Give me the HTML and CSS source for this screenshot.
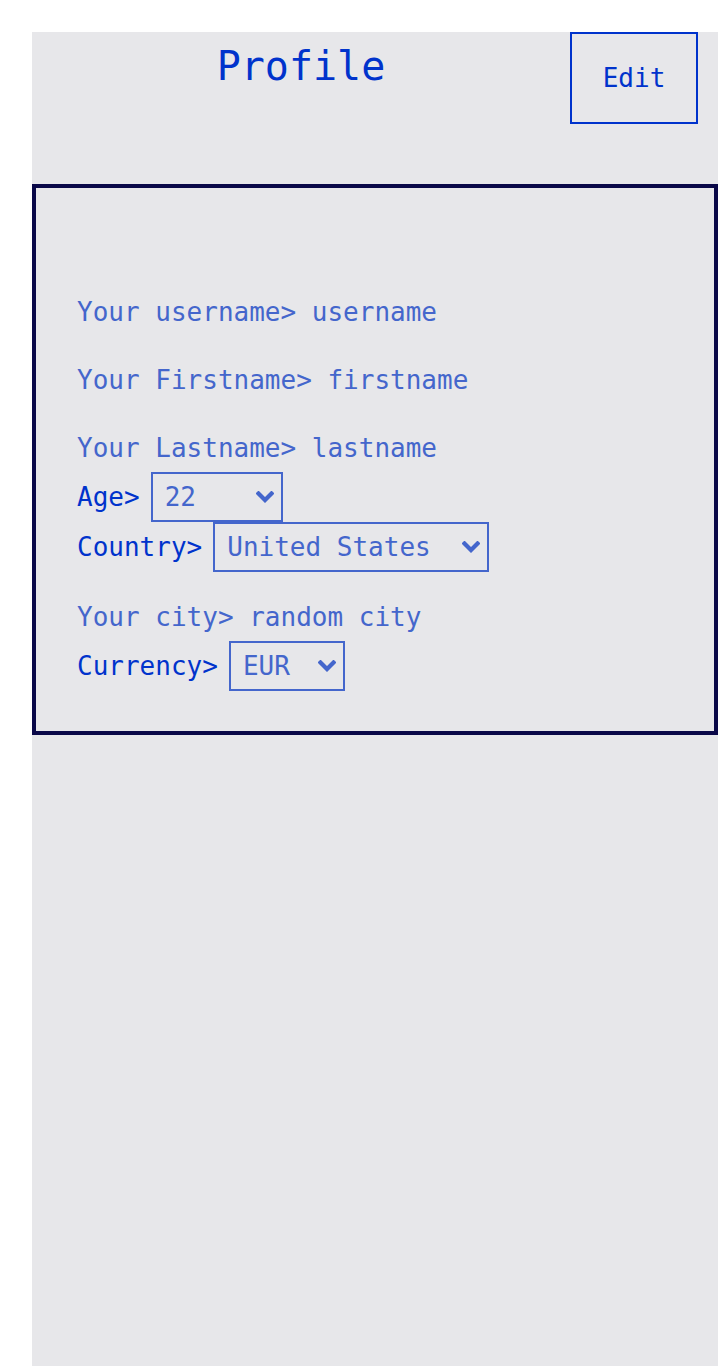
FILE: index.html
```html
<!DOCTYPE html>
<html lang="en">
<head>
<meta charset="utf-8">
<title>Profile</title>
<link rel="stylesheet" href="styles.css">
</head>
<body>
<div class="page">
  <header class="top">
    <h1 class="title">Profile</h1>
    <button class="edit" type="button">Edit</button>
  </header>
  <section class="card">
    <p class="line">Your username> username</p>
    <p class="line gap-lg">Your Firstname> firstname</p>
    <p class="line gap-lg">Your Lastname> lastname</p>
    <div class="field gap-sm">
      <label class="label" for="age">Age></label>
      <span class="sel-wrap">
        <select class="sel sel-age" id="age"><option>22</option></select>
        <svg class="chev" viewBox="0 0 18 12" width="18" height="12" aria-hidden="true"><polyline points="2.5,2.5 9,9 15.5,2.5" fill="none" stroke="currentColor" stroke-width="4.2" stroke-linecap="square"/></svg>
      </span>
    </div>
    <div class="field">
      <label class="label" for="country">Country></label>
      <span class="sel-wrap">
        <select class="sel sel-country" id="country"><option>United States</option></select>
        <svg class="chev" viewBox="0 0 18 12" width="18" height="12" aria-hidden="true"><polyline points="2.5,2.5 9,9 15.5,2.5" fill="none" stroke="currentColor" stroke-width="4.2" stroke-linecap="square"/></svg>
      </span>
    </div>
    <p class="line gap-md">Your city> random city</p>
    <div class="field gap-sm">
      <label class="label" for="currency">Currency></label>
      <span class="sel-wrap">
        <select class="sel sel-currency" id="currency"><option>EUR</option></select>
        <svg class="chev" viewBox="0 0 18 12" width="18" height="12" aria-hidden="true"><polyline points="2.5,2.5 9,9 15.5,2.5" fill="none" stroke="currentColor" stroke-width="4.2" stroke-linecap="square"/></svg>
      </span>
    </div>
  </section>
</div>
</body>
</html>
```
FILE: styles.css
```css
html, body {
  background: #ffffff;
}
body {
  margin: 32px 0 0 32px;
  font-family: "DejaVu Sans Mono", "Liberation Mono", monospace;
}
.page {
  background: #e7e7ea;
  min-height: calc(100vh - 32px);
}
.top {
  display: flex;
  align-items: flex-start;
  height: 152px;
}
.title {
  flex: 1;
  margin: 0;
  padding-top: 10px;
  text-align: center;
  font-size: 40px;
  line-height: 48px;
  font-weight: normal;
  color: #0033cc;
}
.edit {
  width: 128px;
  height: 92px;
  margin-right: 20px;
  border: 2px solid #0033cc;
  background: transparent;
  color: #0033cc;
  font-family: inherit;
  font-size: 26px;
  padding: 0;
}
.card {
  border: 4px solid #0a0848;
  padding: 109px 40px 40px 41px;
  display: flex;
  flex-direction: column;
}
.line {
  margin: 0;
  height: 30px;
  font-size: 26px;
  line-height: 30px;
  color: #4466cc;
  white-space: pre;
}
.gap-lg { margin-top: 38px; }
.gap-md { margin-top: 30px; }
.gap-sm { margin-top: 9px; }
.field {
  display: flex;
  align-items: center;
  gap: 11px;
  height: 50px;
}
.label {
  font-size: 26px;
  color: #0033cc;
}
.sel-wrap {
  position: relative;
  display: flex;
  color: #4466cc;
}
.sel {
  -webkit-appearance: none;
  appearance: none;
  height: 50px;
  box-sizing: border-box;
  border: 2px solid #4466cc;
  border-radius: 0;
  background: transparent;
  color: #4466cc;
  font-family: inherit;
  font-size: 26px;
  padding: 0 30px 0 12px;
  margin: 0;
}
.chev {
  position: absolute;
  right: 9px;
  top: 19px;
  pointer-events: none;
}
.sel-age { width: 132px; }
.sel-country { width: 276px; }
.sel-currency { width: 116px; }
```
